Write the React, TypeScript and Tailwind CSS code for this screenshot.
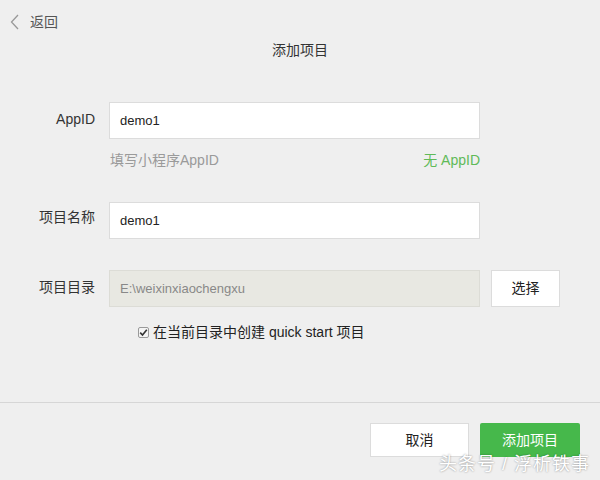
import React from "react";

export default function App() {
  const font = { fontFamily: '"Liberation Sans", "Noto Sans CJK SC", sans-serif' };
  return (
    <div className="relative w-[600px] h-[480px] bg-[#efefef] overflow-hidden flex flex-col text-[14px] text-[#333]" style={font}>
      <div className="flex items-center pl-[10px] pt-[12px] h-[32px] leading-[20px]">
        <svg width="10" height="16" viewBox="0 0 10 16" className="mr-[10px]">
          <path d="M8 1 L1.5 8 L8 15" fill="none" stroke="#999" strokeWidth="1.3" />
        </svg>
        <span className="text-[#555]">返回</span>
      </div>
      <div className="mt-[8px] h-[20px] leading-[20px] text-center text-[#333]">添加项目</div>

      <div className="mt-[42px] flex items-start">
        <div className="w-[95px] text-right pt-[7px] leading-[20px]">AppID</div>
        <div className="ml-[14px] w-[371px] h-[37px] bg-white border border-[#dcdcdc] flex items-center pl-[10px] text-[13px] text-[#222]">demo1</div>
      </div>
      <div className="mt-[11px] ml-[110px] w-[370px] flex justify-between h-[20px] leading-[20px]">
        <span className="text-[#9a9a9a]">填写小程序AppID</span>
        <span className="text-[#5fba58]">无 AppID</span>
      </div>

      <div className="mt-[32px] flex items-start">
        <div className="w-[95px] text-right pt-[5px] leading-[20px]">项目名称</div>
        <div className="ml-[14px] w-[371px] h-[37px] bg-white border border-[#dcdcdc] flex items-center pl-[10px] text-[13px] text-[#222]">demo1</div>
      </div>

      <div className="mt-[31px] flex items-start">
        <div className="w-[95px] text-right pt-[7px] leading-[20px]">项目目录</div>
        <div className="ml-[14px] w-[371px] h-[37px] bg-[#e8e8e2] border border-[#dcdcd6] flex items-center pl-[10px] text-[13px] text-[#888]">E:\weixinxiaochengxu</div>
        <div className="ml-[11px] w-[69px] h-[37px] bg-white border border-[#dcdcdc] flex items-center justify-center text-[#222]">选择</div>
      </div>

      <div className="mt-[15px] ml-[138px] flex items-center h-[20px] leading-[20px]">
        <span className="w-[11px] h-[11px] border border-[#9a9a9a] bg-[#f4f4f4] rounded-[2px] flex items-center justify-center">
          <svg width="9" height="9" viewBox="0 0 9 9">
            <path d="M1.2 4.6 L3.5 7 L7.8 1.8" fill="none" stroke="#333" strokeWidth="1.6" />
          </svg>
        </span>
        <span className="ml-[4px] text-[#222]">在当前目录中创建 quick start 项目</span>
      </div>

      <div className="flex-1" />
      <div className="h-[78px] border-t border-[#d6d6d6] flex justify-end items-start pt-[20px] pr-[20px]">
        <div className="w-[99px] h-[34px] bg-white border border-[#dcdcdc] flex items-center justify-center text-[#222]">取消</div>
        <div className="ml-[11px] w-[100px] h-[34px] bg-[#46b84b] rounded-[2px] flex items-center justify-center text-white">添加项目</div>
      </div>

      <div className="absolute right-[10px] bottom-[4px] text-[18px] leading-[24px] text-white tracking-[1px] [text-shadow:0_0_2px_rgba(0,0,0,0.45)]">头条号 / 浮析铁事</div>
    </div>
  );
}
